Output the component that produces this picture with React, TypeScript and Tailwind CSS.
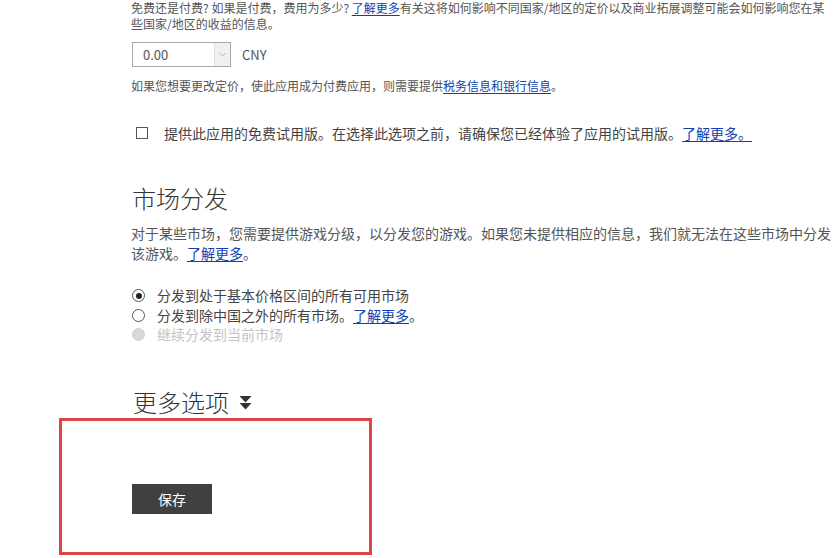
import React from "react";

const font = { fontFamily: '"Noto Sans CJK SC", "Noto Sans", sans-serif' };

function Link({ children }: { children: React.ReactNode }) {
  return <a className="text-[#1240b0] underline underline-offset-2 decoration-1">{children}</a>;
}

function Radio({ checked, disabled, children }: { checked?: boolean; disabled?: boolean; children: React.ReactNode }) {
  return (
    <div className={`flex items-center h-[19.5px] ${disabled ? "text-[#c4c4c4]" : "text-[#444]"}`}>
      <span
        className={`w-[13px] h-[13px] rounded-full border flex items-center justify-center ${
          disabled ? "border-[#d0d0d0] bg-[#d8d8d8]" : "border-[#555] bg-white"
        }`}
      >
        {checked && <span className="w-[6px] h-[6px] rounded-full bg-[#222]" />}
      </span>
      <span className="ml-[12px]">{children}</span>
    </div>
  );
}

export default function App() {
  return (
    <div className="relative w-[836px] h-[558px] bg-white overflow-hidden" style={font}>
      <div className="pl-[131px] pr-[4px] flex flex-col">
        <div className="text-[12px] leading-[16px] text-[#555] whitespace-nowrap">
          <div>
            免费还是付费? 如果是付费，费用为多少? <Link>了解更多</Link>有关这将如何影响不同国家/地区的定价以及商业拓展调整可能会如何影响您在某
          </div>
          <div>些国家/地区的收益的信息。</div>
        </div>

        <div className="mt-[10px] flex items-center">
          <div className="ml-[1px] w-[99px] h-[25px] border border-[#a8a8a8] flex">
            <div className="flex-1 pl-[10px] text-[13px] leading-[23px] text-[#555]">0.00</div>
            <div className="w-[16px] h-full bg-[#f0f0f0] border-l border-[#e2e2e2] flex items-center justify-center">
              <svg width="7" height="5" viewBox="0 0 7 5">
                <path d="M0.5 1 L3.5 4 L6.5 1" fill="none" stroke="#b8b8b8" strokeWidth="1" />
              </svg>
            </div>
          </div>
          <span className="ml-[11px] text-[13px] text-[#555]">CNY</span>
        </div>

        <div className="mt-[11px] text-[12px] leading-[16px] text-[#555] whitespace-nowrap">
          如果您想要更改定价，使此应用成为付费应用，则需要提供<Link>税务信息和银行信息</Link>。
        </div>

        <div className="mt-[29px] flex items-center h-[20px] text-[14px] text-[#444] whitespace-nowrap">
          <span className="ml-[5px] w-[12px] h-[12px] border border-[#555] bg-white" />
          <span className="ml-[16px]">
            提供此应用的免费试用版。在选择此选项之前，请确保您已经体验了应用的试用版。<Link>了解更多。</Link>
          </span>
        </div>

        <h2 className="mt-[39px] ml-[1px] text-[24px] leading-[32px] text-[#333] font-light">市场分发</h2>

        <div className="mt-[9px] text-[14px] leading-[20px] text-[#555] whitespace-nowrap">
          <div>对于某些市场，您需要提供游戏分级，以分发您的游戏。如果您未提供相应的信息，我们就无法在这些市场中分发</div>
          <div>
            该游戏。<Link>了解更多</Link>。
          </div>
        </div>

        <div className="mt-[23px] ml-[1px] flex flex-col text-[14px] whitespace-nowrap">
          <Radio checked>分发到处于基本价格区间的所有可用市场</Radio>
          <Radio>
            分发到除中国之外的所有市场。<Link>了解更多</Link>。
          </Radio>
          <Radio disabled>继续分发到当前市场</Radio>
        </div>

        <div className="mt-[41px] ml-[2px] flex items-center h-[32px]">
          <span className="text-[24px] leading-[32px] text-[#333] font-light">更多选项</span>
          <svg className="ml-[10px] mt-[2px]" width="13" height="16" viewBox="0 0 13 16">
            <path d="M0.5 1 L12.5 1 L6.5 7.5 Z" fill="#333" />
            <path d="M0.5 8 L12.5 8 L6.5 14.5 Z" fill="#333" />
          </svg>
        </div>

        <div className="mt-[66px] ml-[1px]">
          <button className="w-[80px] h-[30px] bg-[#404040] text-white text-[14px] leading-[30px]">保存</button>
        </div>
      </div>

      <div className="absolute left-[59px] top-[418px] w-[313px] h-[137px] border-[3px] border-[#dd4549] pointer-events-none" />
    </div>
  );
}
